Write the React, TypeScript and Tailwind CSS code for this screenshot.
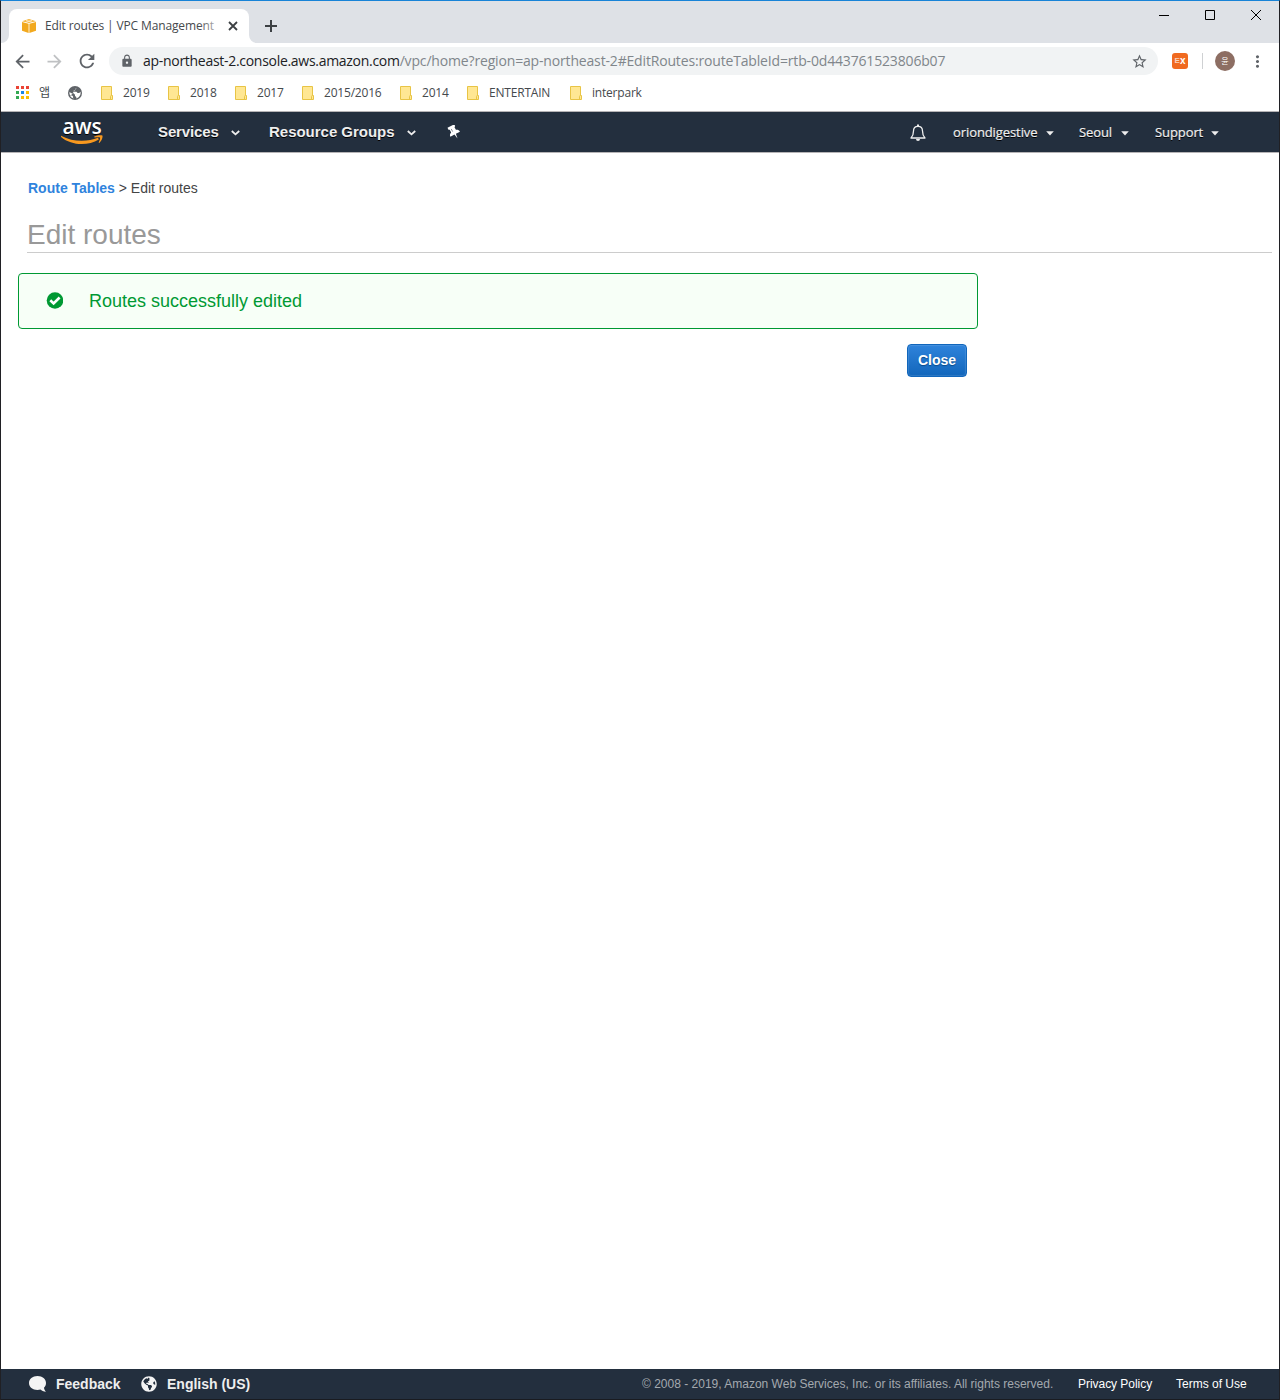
import React from 'react';
import { MdArrowBack, MdArrowForward, MdRefresh, MdLock, MdStarBorder, MdMoreVert } from 'react-icons/md';
import { FaGlobeAmericas } from 'react-icons/fa';

const uiFont = "font-['Open_Sans','Noto_Sans_CJK_KR',sans-serif]";
const arial = "font-['Liberation_Sans',Arial,sans-serif]";

function CubeIcon() {
  return (
    <svg width="16" height="16" viewBox="0 0 16 16" className="shrink-0">
      <path d="M1 3.2 8 1l7 2.2L8 5z" fill="#f5b335" />
      <path d="M1 4.1 7.6 5.8V15L1 12.8z" fill="#f2a91f" />
      <path d="M15 4.1 8.4 5.8V15l6.6-2.2z" fill="#f2a91f" />
      <path d="M5 2.3 11.5 4.3M11 2.3 4.5 4.3" stroke="#fff" strokeWidth=".6" />
    </svg>
  );
}

function AppsIcon() {
  const colors = ['#ea4335', '#ea4335', '#ea4335', '#34a853', '#1a86e8', '#fbbc04', '#34a853', '#fbbc04', '#fbbc04'];
  return (
    <div className="grid grid-cols-3 gap-[2px] w-[13px] shrink-0">
      {colors.map((c, i) => (
        <span key={i} className="w-[3px] h-[3px]" style={{ backgroundColor: c }} />
      ))}
    </div>
  );
}

function GlobeIcon() {
  return (
    <svg width="14" height="14" viewBox="0 0 14 14" className="shrink-0">
      <circle cx="7" cy="7" r="7" fill="#5f6368" />
      <path d="M8.800 1.800 7.200 3v1.200H5.800v1.600h2.700l1.100 1.300h1.600l1.300-1.300c.6 2.900-1.200 5.800-4.200 6.600V11L7 10V8.700L5.600 7.300H3.400L1.500 6C1.300 7 1.500 8.300 2 9.200l2.100.2 1 1.200v1.500l1.200.5c-1.700-.2-3-1-4-2.300" fill="#fff" />
    </svg>
  );
}

function FolderIcon() {
  return (
    <svg width="13" height="14" viewBox="0 0 13 14" className="shrink-0">
      <path d="M.5.5h10v9h1v4H.5z" fill="#ffe793" stroke="#e8c445" />
      <path d="M9.5 13V10.5c0-.6.4-1 1-1" fill="none" stroke="#e8c445" />
    </svg>
  );
}

function Bookmark({ label, width }: { label: string; width: string }) {
  return (
    <div className={`flex items-center shrink-0 ${width}`}>
      <FolderIcon />
      <span className="ml-[9px] whitespace-nowrap tracking-[-0.2px]">{label}</span>
    </div>
  );
}

function Chevron() {
  return (
    <svg width="9" height="6" viewBox="0 0 9 6" className="shrink-0">
      <path d="M.8 1 4.5 4.400 8.200 1" fill="none" stroke="#eee" strokeWidth="1.800" />
    </svg>
  );
}

function Caret() {
  return (
    <svg width="8" height="5" viewBox="0 0 8 5" className="shrink-0">
      <path d="M.2.2h7.600L4 4.500z" fill="#eee" />
    </svg>
  );
}

function PinIcon() {
  return (
    <svg width="14" height="15" viewBox="0 0 14 15" className="shrink-0">
      <g transform="rotate(-28 7 7)">
        <path d="M3.200.3h7.600v2l-1.100.7v3c1.600.5 2.700 1.600 2.700 3.500H7.800L7 14.500l-.8-5H1.600c0-1.900 1.100-3 2.700-3.500V3l-1.100-.7z" fill="#fff" />
        <path d="M6 3v3" stroke="#232f3e" strokeWidth=".5" />
      </g>
    </svg>
  );
}

function TabStrip() {
  return (
    <div className="flex h-[42px] bg-[#dee1e6]">
      <div className="flex items-end">
        <svg width="8" height="8" viewBox="0 0 8 8"><path d="M8 0v8H0a8 8 0 0 0 8-8z" fill="#fff" /></svg>
        <div className="flex items-center mt-2 h-[34px] w-[240px] rounded-t-lg bg-white pl-3 text-[12px] text-[#45494d]">
          <CubeIcon />
          <div className="relative ml-2 w-[176px] whitespace-nowrap tracking-[-0.14px]">
            Edit routes | VPC Management
            <span className="absolute left-[154px] top-0 h-full w-[22px] bg-gradient-to-r from-white/0 to-white/80" />
          </div>
          <svg width="10" height="10" viewBox="0 0 10 10" className="ml-[7px]"><path d="m1 1 8 8M9 1 1 9" stroke="#3c4043" strokeWidth="1.800" /></svg>
        </div>
        <svg width="8" height="8" viewBox="0 0 8 8"><path d="M0 0v8h8a8 8 0 0 1-8-8z" fill="#fff" /></svg>
      </div>
      <svg width="12" height="12" viewBox="0 0 12 12" className="mt-[19px] ml-[8px]"><path d="M6 0v12M0 6h12" stroke="#3c4043" strokeWidth="2" /></svg>
      <div className="ml-auto mr-[18px] mt-[9px] flex h-[11px] gap-[36px]">
        <svg width="10" height="10" viewBox="0 0 10 10"><path d="M0 5.500h10" stroke="#000" /></svg>
        <svg width="10" height="10" viewBox="0 0 10 10"><path d="M.5.5h9v9h-9z" fill="none" stroke="#000" /></svg>
        <svg width="10" height="10" viewBox="0 0 10 10"><path d="m0 0 10 10M10 0 0 10" stroke="#000" /></svg>
      </div>
    </div>
  );
}

function AddressBar() {
  return (
    <div className="flex h-[36px] items-center bg-white pl-[11px]">
      <MdArrowBack size={21} color="#5f6368" />
      <MdArrowForward size={21} color="#bfc1c3" className="ml-[11px]" />
      <MdRefresh size={22} color="#5f6368" className="ml-[11px]" />
      <div className="ml-[11px] flex h-7 w-[1049px] items-center rounded-full bg-[#f1f3f4] pl-[11px]">
        <MdLock size={14} color="#5f6368" />
        <span className="-mt-px ml-[9px] w-[980px] whitespace-nowrap text-[14px] tracking-[-0.165px] text-[#80868b]">
          <span className="tracking-[-0.29px] text-[#202124]">ap-northeast-2.console.aws.amazon.com</span>/vpc/home?region=ap-northeast-2#EditRoutes:routeTableId=rtb-0d443761523806b07
        </span>
        <MdStarBorder size={17} color="#5f6368" className="ml-[8px]" />
      </div>
      <div className={`ml-[14px] flex h-4 w-4 items-center justify-center rounded-[3px] bg-[#f06a20] text-[10px] font-bold leading-none text-white ${arial}`}>
        <span className="text-[8px] opacity-70">E</span>x
      </div>
      <span className="ml-[14px] h-4 w-px bg-[#cfd1d3]" />
      <div className="ml-[12px] flex h-5 w-5 items-center justify-center rounded-full bg-[#8d6e63] text-[8px] leading-none text-white">윤</div>
      <MdMoreVert size={19} color="#5f6368" className="ml-[13px]" />
    </div>
  );
}

function BookmarksBar() {
  return (
    <div className="flex h-[33px] items-center border-b border-[#b6b4b6] bg-white pb-[5px] pl-[15px] text-[12px] text-[#45494d]">
      <AppsIcon />
      <span className="ml-[10px] w-[14px] text-[12px]">앱</span>
      <span className="ml-[15px] mr-[19px] flex"><GlobeIcon /></span>
      <Bookmark label="2019" width="w-[67px]" />
      <Bookmark label="2018" width="w-[67px]" />
      <Bookmark label="2017" width="w-[67px]" />
      <Bookmark label="2015/2016" width="w-[98px]" />
      <Bookmark label="2014" width="w-[67px]" />
      <Bookmark label="ENTERTAIN" width="w-[103px]" />
      <Bookmark label="interpark" width="w-[90px]" />
    </div>
  );
}

function AwsLogo() {
  return (
    <div className="flex w-[42px] flex-col items-center pb-[2px]">
      <span className="text-[21px] font-semibold leading-[16px] tracking-[-0.1px] text-white">aws</span>
      <svg width="42" height="10" viewBox="0 0 42 10" className="mt-px">
        <path d="M.5.900C11 6.700 26 7.300 37 2.700l.8 1.700C27 11 10.500 10.700.1 1.900c-.3-.5 0-1.200.4-1z" fill="#f7981f" />
        <path d="M33.300 1.600C36 .1 40-.1 41.400.6c.6 1.600-.7 5.200-2.900 7.100-.6.400-1 .1-.7-.5.8-1.800 1.700-4 1.200-4.700-.7-.6-3.600-.3-5.200-.1-.6 0-.8-.5-.5-.8z" fill="#f7981f" />
      </svg>
    </div>
  );
}

function ConsoleNav() {
  return (
    <nav className={`flex h-[41px] items-center border-b border-[#b6b4b6] bg-[#232f3e] text-[#eee] [text-shadow:0_1px_0_#000] ${uiFont}`}>
      <div className="ml-[60px]"><AwsLogo /></div>
      <div className={`flex items-center text-[15px] font-bold ${arial}`}>
        <span className="ml-[55px] w-[61px] whitespace-nowrap tracking-[-0.12px]">Services</span>
        <span className="ml-[12px] mt-[2px] flex"><Chevron /></span>
        <span className="ml-[29px] w-[126px] whitespace-nowrap tracking-[-0.02px]">Resource Groups</span>
        <span className="ml-[12px] mt-[2px] flex"><Chevron /></span>
      </div>
      <span className="ml-[31px] mt-px"><PinIcon /></span>
      <div className="ml-auto mr-[60px] flex items-center text-[13px] font-medium tracking-[-0.09px] [-webkit-text-stroke:0.2px_#eee]">
        <svg width="16" height="18" viewBox="0 0 16 18" className="mt-px">
          <path d="M1 14h14c-2-2-2.500-4-2.500-7C12.500 4 11 2.300 8 2.300S3.500 4 3.500 7c0 3-.5 5-2.500 7z" fill="none" stroke="#eee" strokeWidth="1.300" strokeLinejoin="round" />
          <path d="M6 15h4a2 2 0 0 1-4 0zM7 .5h2v2H7z" fill="#eee" />
        </svg>
        <span className="ml-[27px] mt-px w-[85px] whitespace-nowrap">oriondigestive</span>
        <span className="ml-[8px] mt-[2px] flex"><Caret /></span>
        <span className="ml-[25px] mt-px w-[34px] whitespace-nowrap">Seoul</span>
        <span className="ml-[8px] mt-[2px] flex"><Caret /></span>
        <span className="ml-[26px] mt-px w-[48px] whitespace-nowrap">Support</span>
        <span className="ml-[8px] mt-[2px] flex"><Caret /></span>
      </div>
    </nav>
  );
}

function Footer() {
  return (
    <footer className={`flex h-[31px] items-center border-b border-[#191b20] bg-[#232f3e] text-[12px] text-white ${arial}`}>
      <svg width="18" height="16" viewBox="0 0 18 16" className="ml-[28px] shrink-0">
        <path d="M8.500 0C13.500 0 17 3 17 7c0 2-.8 3.600-2 4.800.2 1.600 1 2.900 2 4-2.400-.2-4.500-.9-5.500-2.200-1 .3-2 .4-3 .4C3.500 14 0 11 0 7s3.500-7 8.500-7z" fill="#f4f4f4" />
      </svg>
      <span className="ml-[9px] w-[66px] whitespace-nowrap text-[14px] font-bold text-[#eee]">Feedback</span>
      <FaGlobeAmericas size={16} color="#f4f4f4" className="ml-[19px]" />
      <span className="ml-[10px] whitespace-nowrap text-[14px] font-bold text-[#eee]">English (US)</span>
      <span className="ml-auto w-[412px] whitespace-nowrap text-[#a3a9af]">© 2008 - 2019, Amazon Web Services, Inc. or its affiliates. All rights reserved.</span>
      <span className="ml-[24px] w-[75px] whitespace-nowrap tracking-[-0.04px]">Privacy Policy</span>
      <span className="ml-[23px] mr-[33px] w-[70px] whitespace-nowrap">Terms of Use</span>
    </footer>
  );
}

export default function App() {
  return (
    <div className={`flex h-[1400px] w-[1280px] flex-col border-x border-t border-x-[#202024] border-t-[#1883d7] bg-white ${uiFont}`}>
      <TabStrip />
      <AddressBar />
      <BookmarksBar />
      <ConsoleNav />
      <main className={`flex-1 ${arial}`}>
        <div className="ml-[27px] mt-[25px] text-[14px] leading-5 text-[#444]">
          <span className="font-bold text-[#2f83dd]">Route Tables</span> &gt; Edit routes
        </div>
        <h1 className="ml-[26px] mr-[7px] mt-[18px] h-[37px] border-b border-[#ccc] text-[28px] leading-[38px] text-[#999]">Edit routes</h1>
        <div className="ml-[17px] mt-[20px] flex h-[56px] w-[960px] items-center rounded-[4px] border border-[#093] bg-[#f7fff7] text-[18px] text-[#093]">
          <svg width="17" height="17" viewBox="0 0 17 17" className="-mt-[2px] ml-[27px] shrink-0">
            <circle cx="9" cy="8.500" r="8.300" fill="#093" />
            <path d="m4.300 8.300 3.300 3.200 6-6" fill="none" stroke="#fff" strokeWidth="2.600" />
          </svg>
          <span className="ml-[26px] whitespace-nowrap">Routes successfully edited</span>
        </div>
        <div className="mt-[15px] flex w-[966px] justify-end">
          <button className="h-[33px] w-[60px] rounded-[4px] border border-[#1166bb] bg-gradient-to-b from-[#2e83db] to-[#1166bb] text-[14px] font-bold text-white shadow-[inset_0_0_1px_1px_rgba(255,255,255,0.12)] [text-shadow:0_1px_1px_#0b4a8a]">Close</button>
        </div>
      </main>
      <Footer />
    </div>
  );
}
